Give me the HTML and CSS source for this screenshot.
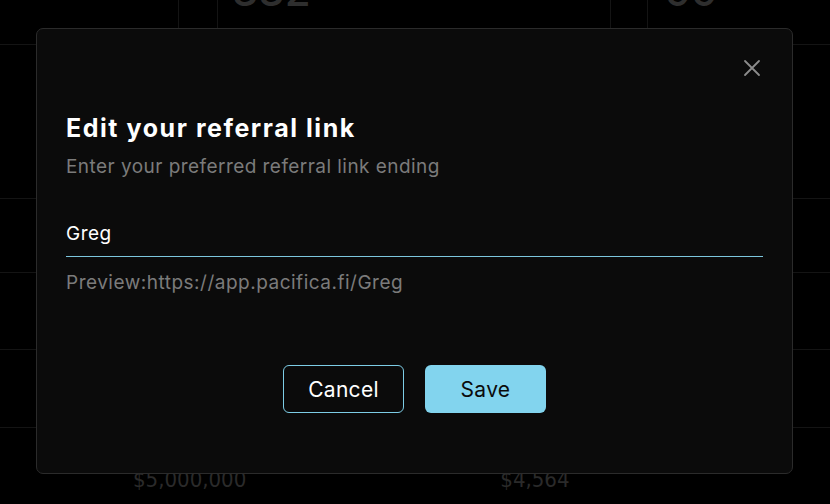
FILE: index.html
```html
<!DOCTYPE html>
<html lang="en">
<head>
<meta charset="utf-8">
<title>Edit your referral link</title>
<link rel="stylesheet" href="styles.css">
</head>
<body>
<div class="page">
  <div class="row row-top">
    <div class="col c1"></div>
    <div class="col c2"></div>
    <div class="col c3"><span class="big-num">332</span></div>
    <div class="col c4"></div>
    <div class="col c5"><span class="big-num">99</span></div>
  </div>
  <div class="row r2"></div>
  <div class="row r3"></div>
  <div class="row r4"></div>
  <div class="row r5"></div>
  <div class="row-bottom">
    <span class="amount a1">$5,000,000</span>
    <span class="amount a2">$4,564</span>
  </div>
</div>

<div class="overlay">
  <div class="modal" role="dialog" aria-labelledby="modal-title">
    <div class="modal-head">
      <button class="close" aria-label="Close">
        <svg width="18" height="18" viewBox="0 0 18 18" fill="none" stroke="#8c8c8c" stroke-width="1.8" stroke-linecap="round">
          <path d="M2 2 L16 16 M16 2 L2 16"/>
        </svg>
      </button>
    </div>
    <h2 class="title" id="modal-title">Edit your referral link</h2>
    <p class="subtitle">Enter your preferred referral link ending</p>
    <div class="field">Greg</div>
    <p class="preview">Preview:https://app.pacifica.fi/Greg</p>
    <div class="actions">
      <button class="btn btn-cancel">Cancel</button>
      <button class="btn btn-save">Save</button>
    </div>
  </div>
</div>
</body>
</html>
```
FILE: styles.css
```css
* { box-sizing: border-box; }

html, body {
  margin: 0;
  padding: 0;
  background: #000;
  height: 100%;
  overflow: hidden;
}

body {
  font-family: "Inter", "Noto Sans", sans-serif;
  color: #fff;
}

/* background page */
.page {
  display: flex;
  flex-direction: column;
  height: 100%;
}

.row {
  border-bottom: 1px solid #141414;
}

.row-top {
  height: 45px;
  display: grid;
  grid-template-columns: 179px 39px 393px 37px 1fr;
}

.col {
  border-right: 1px solid #141414;
}

.c5 { border-right: none; }

.big-num {
  display: block;
  font-size: 42px;
  line-height: 42px;
  font-weight: 500;
  color: #2e2e2e;
  margin-top: -30px;
}

.c3 .big-num { padding-left: 14px; }
.c5 .big-num { padding-left: 17px; }

.r2 { height: 154px; }
.r3 { height: 74px; }
.r4 { height: 77px; }
.r5 { height: 78px; }

.row-bottom {
  display: flex;
  padding-top: 39px;
}

.amount {
  font-family: "DejaVu Sans Condensed", "DejaVu Sans", sans-serif;
  font-size: 22px;
  color: #2a2a2a;
  line-height: 26px;
}

.a1 { margin-left: 133px; }
.a2 { margin-left: 254px; }

/* modal */
.overlay {
  position: fixed;
  inset: 0;
  display: flex;
  align-items: flex-start;
  justify-content: center;
  padding-top: 28px;
}

.modal {
  width: 757px;
  height: 446px;
  margin-left: -1px;
  background: #0b0b0b;
  border: 1px solid #2b2b2b;
  border-radius: 7px;
  padding: 30px 29px 30px 29px;
  display: flex;
  flex-direction: column;
}

.modal-head {
  display: flex;
  justify-content: flex-end;
  height: 18px;
}

.close {
  background: none;
  border: none;
  padding: 0;
  margin-right: 2px;
  width: 18px;
  height: 18px;
  cursor: pointer;
  display: block;
}

.close svg { display: block; }

.title {
  margin: 36px 0 0;
  font-size: 25px;
  line-height: 30px;
  font-weight: 700;
  color: #fff;
  letter-spacing: 1.55px;
}

.subtitle {
  margin: 12px 0 0;
  font-size: 19px;
  line-height: 24px;
  color: #7b7b7b;
  font-weight: 400;
  letter-spacing: 0.45px;
}

.field {
  margin-top: 43px;
  font-size: 19px;
  line-height: 24px;
  color: #fff;
  padding-bottom: 10px;
  border-bottom: 1.5px solid #7cc6dd;
  letter-spacing: 0.5px;
}

.preview {
  margin: 14px 0 0;
  font-size: 19px;
  line-height: 24px;
  color: #7b7b7b;
  letter-spacing: 0.5px;
}

.actions {
  margin-top: 70px;
  display: flex;
  justify-content: center;
  gap: 21px;
}

.btn {
  width: 121px;
  height: 48px;
  border-radius: 6px;
  font-family: "Inter", "Noto Sans", sans-serif;
  font-size: 21px;
  letter-spacing: 0.3px;
  cursor: pointer;
}

.btn-cancel {
  background: #0b0b0b;
  border: 1.5px solid #7dcde6;
  color: #fff;
}

.btn-save {
  background: #82d4ee;
  border: none;
  color: #0b0b0b;
}
```
